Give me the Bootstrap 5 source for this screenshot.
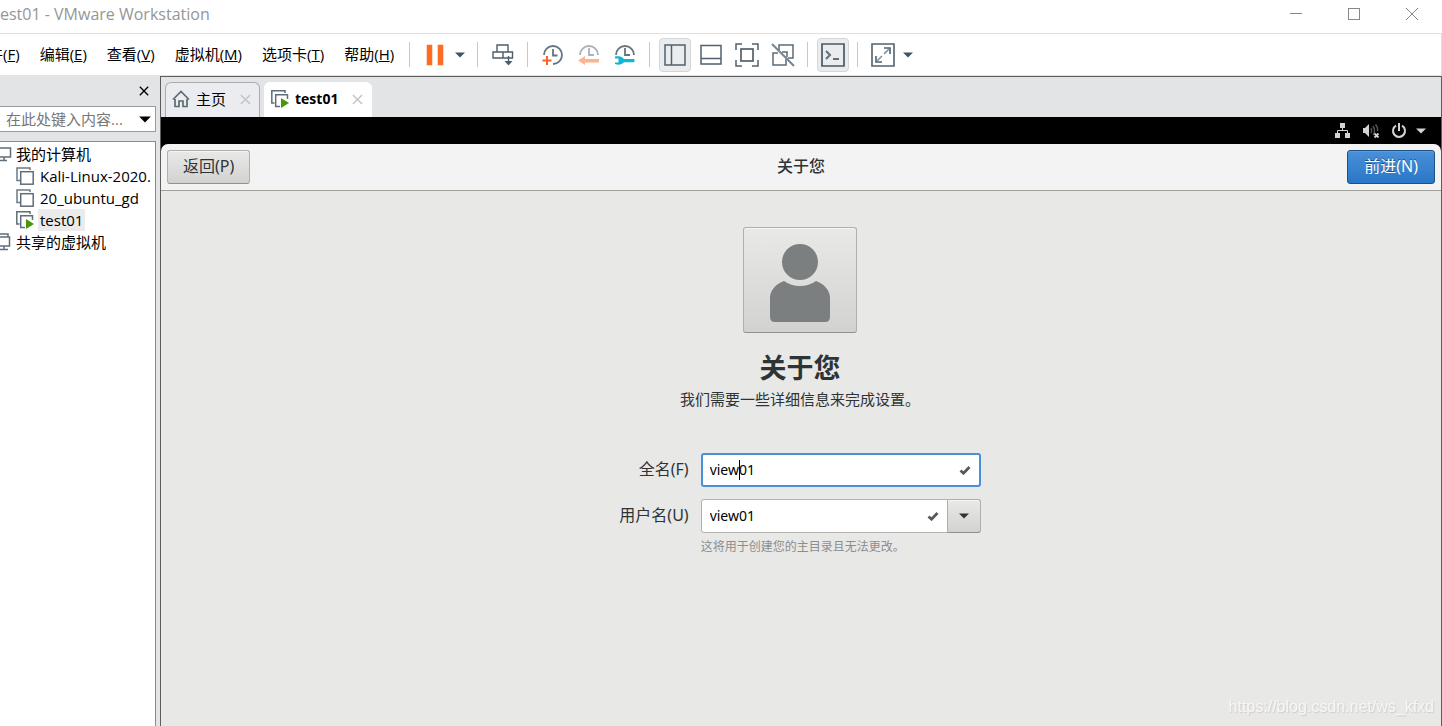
<!DOCTYPE html>
<html lang="zh-CN">
<head>
<meta charset="utf-8">
<meta name="viewport" content="width=device-width, initial-scale=1">
<title>test01 - VMware Workstation</title>
<link rel="stylesheet" href="https://cdn.jsdelivr.net/npm/bootstrap@5.3.0/dist/css/bootstrap.min.css">
<style>
body{font-family:"Open Sans","Noto Sans CJK SC",sans-serif;font-size:15px;line-height:22px;color:#000;background:#fff;overflow:hidden}
button{padding:0;border:0;background:none;color:inherit}
svg{display:block;flex:none}
.titlebar{height:34px;border-bottom:1px solid #e0e0e0;color:#969696;padding-right:1px}
.titlebar h1{font-size:16px;line-height:28px;margin:0;font-weight:400}
.winctl{width:58px;height:28px;display:grid;place-items:center}
.toolstrip{height:42px;border-bottom:1px solid #e3e3e3;border-right:1px solid #ddd}
.menus{gap:20px;margin-left:-12px;padding:0 11px 2px 0}
.menus a{color:#000;text-decoration:none;white-space:nowrap}
.tools{gap:4px}
.rule{width:1px;height:25px;background:#c8c8c8;margin:0 5px 0 4px}
.tool{width:32px;height:34px;display:grid;place-items:center;border-radius:4px}
.tool.on{background:#ebecee;border:1px solid #d5d6d8}
.drop{width:14px;height:24px;display:grid;align-items:center}
.workspace{background:#e3e4e6;min-height:0}
.library{width:156px;margin-right:4px}
.library-head{height:30px;padding-right:7px}
.filter{height:26px;border:1px solid #999a9e;border-left:0;background:#fff}
.filter input{border:0;padding:0 0 0 6px;min-width:0;outline:0;background:none;color:#000}
.filter input::placeholder{color:#777;opacity:1}
.tree{border:1px solid #858b95;border-width:1px 1px 0 0;background:#fff;margin:9px 0 0;padding-top:1px}
.tree li{height:22px;white-space:nowrap;overflow:hidden}
.tree span{padding:0 2px}
.tree .vm{padding-left:16px}
.tree .host{gap:2px}
.tree .picked{background:#ebebeb}
.console{border:1px solid #5c5c5c;border-bottom:0;min-width:0}
.tabs{height:40px;padding:5px 0 0 4px;gap:4px}
.vmtab{height:35px;border:1px solid #abacae;border-bottom:0;border-radius:6px 6px 0 0;background:#ebecef;padding:0 8px 2px 6px;gap:6px}
.vmtab.current{background:#fff;border-color:#fff}
.vmtab b{font-size:14px}
.vmtab .shut{margin-left:8px}
.guest{background:#000;color:#2e3436;font-family:"Noto Sans","Noto Sans CJK SC",sans-serif}
.statusbar{height:27px;padding-right:14px}
.headerbar{height:47px;background:#f3f3f3;border-bottom:1px solid #a1a19a;border-radius:7px 7px 0 0;padding:0 6px}
.headerbar h2{font-size:16px;line-height:22px;margin:0;padding-bottom:2px;font-weight:500;text-align:center}
.gbtn{height:34px;border:1px solid #b0b0ad;border-bottom-color:#92928e;border-radius:3px;background:linear-gradient(#e9e9e7,#d2d2d0);box-shadow:inset 0 1px #f5f5f4}
.headerbar .gbtn{padding:0 15px 2px;font-size:16px;line-height:22px}
.headerbar .gbtn.go{padding:0 16px 2px}
.gbtn.go{color:#fff;border-color:#1c5187;background:linear-gradient(#4a90d9,#2a76c6);box-shadow:inset 0 1px #5b9ddf;text-shadow:0 -1px #1c5187}
.setup{background:#e8e8e6;padding:36px 2px 0 0}
.avatar{width:114px;height:106px;display:grid;place-items:center;padding-top:6px}
.setup h3{font-size:27px;line-height:38px;font-weight:700;margin:16px 0 1px}
.setup p{margin:0}
.fields{display:grid;grid-template-columns:auto 280px;column-gap:12px;row-gap:12px;align-items:center;justify-items:end;margin-top:43px}
.fields label{font-size:16px;padding-bottom:2px}
.entry{width:280px;height:34px;border:1px solid #b0b0ad;border-radius:3px;background:#fff;color:#000}
.entry input{border:0;outline:0;background:none;min-width:0;padding:0 0 0 8px;line-height:22px;color:#000;font-family:"Noto Sans",sans-serif;font-size:14px}
.entry.active{border:2px solid #4a90d9;padding-right:8px}
.entry.active input{padding-left:7px}
.cursor{position:absolute;left:36px;top:5px;width:1px;height:20px;background:#000}
.entry .gbtn{width:34px;margin:-1px;border-radius:0 3px 3px 0;display:grid;place-items:center}
.hint{grid-column:2;justify-self:start;font-size:12px;line-height:20px;color:#8b8e8f;margin-top:-8px!important}
.watermark{position:absolute;right:7px;bottom:8px;font:16px/22px "Liberation Sans",sans-serif;color:#f7f7f6;text-shadow:1px 1px 1px #ccc;text-decoration:none}
</style>
</head>
<body class="vh-100 d-flex flex-column">
<svg width="0" height="0" class="position-absolute" aria-hidden="true">
<defs>
<symbol id="vm" viewBox="0 0 18 18"><path d="M4 13.500H1V1H14V3" fill="none" stroke="#6c7a87" stroke-width="1.500"/><rect x="4.700" y="4.700" width="12.500" height="12.500" fill="#fff" stroke="#5f6e7b" stroke-width="1.500"/></symbol>
<symbol id="vmrun" viewBox="0 0 18 18"><path d="M3.500 13H.8V.8H14V3M9 16.500H4.700V4.700H16.500V9" fill="none" stroke="#5f6e7b" stroke-width="1.500"/><path d="M10 8 18 13 10 18Z" fill="#45980c"/></symbol>
<symbol id="tri" viewBox="0 0 10 6"><path d="M0 .5H10L5 5.500Z" fill="currentColor"/></symbol>
<symbol id="cross" viewBox="0 0 12 12"><path d="M1 1 11 11M11 1 1 11" stroke="currentColor" stroke-width="1.600"/></symbol>
<symbol id="check" viewBox="0 0 12 10"><path d="M1.500 5.500 4.500 8.200 10.500 2" fill="none" stroke="#555a5b" stroke-width="2.800"/></symbol>
</defs>
</svg>

<header class="titlebar d-flex justify-content-between flex-shrink-0">
<h1>est01 - VMware Workstation</h1>
<div class="d-flex">
<button class="winctl" aria-label="最小化"><svg width="12" height="12"><path d="M0 5.500H12" stroke="#888"/></svg></button>
<button class="winctl" aria-label="最大化"><svg width="12" height="12"><rect x=".5" y=".5" width="11" height="11" fill="none" stroke="#888"/></svg></button>
<button class="winctl" aria-label="关闭"><svg width="12" height="12"><path d="M0 0 12 12M12 0 0 12" stroke="#888"/></svg></button>
</div>
</header>

<div class="toolstrip d-flex align-items-center flex-shrink-0">
<nav class="menus d-flex">
<a href="#">件(<u>F</u>)</a><a href="#">编辑(<u>E</u>)</a><a href="#">查看(<u>V</u>)</a><a href="#">虚拟机(<u>M</u>)</a><a href="#">选项卡(<u>T</u>)</a><a href="#">帮助(<u>H</u>)</a>
</nav>
<div class="tools d-flex align-items-center">
<span class="rule"></span>
<button class="tool" aria-label="挂起"><svg width="18" height="22"><path d="M1 1H6V21H1ZM12 1H17V21H12Z" fill="#ff6a1f" stroke="#ee7a3b" stroke-width=".6"/></svg></button>
<button class="drop" aria-label="电源"><svg width="10" height="6" color="#44535f"><use href="#tri"/></svg></button>
<span class="rule"></span>
<button class="tool" aria-label="发送按键"><svg width="22" height="22" fill="none" stroke="#4e5d69" stroke-width="1.400"><path d="M5 8V1H16V8M1 8H20.500V14H1ZM11 8V14M16.500 12V20"/><path d="M12.500 17H20.500L16.500 21.500Z" fill="#4e5d69" stroke="none"/></svg></button>
<span class="rule"></span>
<button class="tool" aria-label="拍摄快照"><svg width="22" height="22" fill="none" stroke="#65737f" stroke-width="1.800"><path d="M2 11A9 9 0 1 1 11 20M11 5V11.500H15.500"/><path d="M5 12V21M.5 16.500H9.500" stroke="#f26522" stroke-width="2"/></svg></button>
<button class="tool" aria-label="恢复快照"><svg width="22" height="22" fill="none" stroke="#a9b2b9" stroke-width="1.800"><path d="M2 11A9 9 0 0 1 20 11M11 4V11H16"/><path d="M0 16.500 7 12V15H21V18.500H7V21Z" fill="#ffb28e" stroke="none"/></svg></button>
<button class="tool" aria-label="管理快照"><svg width="22" height="22" fill="none" stroke="#65737f" stroke-width="1.800"><path d="M2 11A9 9 0 0 1 20 11M11 4V11H16"/><path d="M1 12.500C8 11 10 15 10 15H20Q21.500 16.500 20 18.200H10Q7 22 1 20V18.500H4.500V14.500H1Z" fill="#11b5d5" stroke="none"/></svg></button>
<span class="rule"></span>
<button class="tool on" aria-label="显示库"><svg width="22" height="22" fill="none" stroke="#52616d" stroke-width="1.500"><path d="M1 1H21V21H1ZM7.500 1V21"/></svg></button>
<button class="tool" aria-label="缩略图栏"><svg width="22" height="22" fill="none" stroke="#52616d" stroke-width="1.500"><path d="M1 1.500H21V20H1ZM1 14.500H21"/></svg></button>
<button class="tool" aria-label="全屏"><svg width="24" height="24" fill="none" stroke="#52616d" stroke-width="1.500"><path d="M1 7V1H7M17 1H23V7M23 17V23H17M7 23H1V17"/><rect x="6" y="6" width="12" height="12" stroke-width="1.700"/></svg></button>
<button class="tool" aria-label="Unity"><svg width="24" height="24" fill="none" stroke="#5c6b77" stroke-width="1.500"><path d="M8 7V2H22V15H17M7 10H2V22H15V16M11 9H16V14"/><path d="M1 1 23 23" stroke="#748492" stroke-width="2"/></svg></button>
<span class="rule"></span>
<button class="tool on" aria-label="控制台"><svg width="24" height="24" fill="none" stroke="#4a5965" stroke-width="1.700"><path d="M1 1H23V23H1Z"/><path d="M5 8 9 12 5 16M12 16H18" stroke="#61707c" stroke-width="2"/></svg></button>
<span class="rule"></span>
<button class="tool" aria-label="拉伸"><svg width="24" height="24" fill="none" stroke="#52616d" stroke-width="1.600"><path d="M1 1H23V23H1Z"/><path d="M13 5H19V11M5 13V19H11"/><path d="M6 18 18 6" stroke-dasharray="7 3" stroke="#84919b"/></svg></button>
<button class="drop" aria-label="拉伸选项"><svg width="10" height="6" color="#44535f"><use href="#tri"/></svg></button>
</div>
</div>

<div class="workspace d-flex flex-fill">
<aside class="library d-flex flex-column flex-shrink-0">
<div class="library-head d-flex align-items-center justify-content-end"><button aria-label="关闭库"><svg width="10" height="10"><use href="#cross"/></svg></button></div>
<div class="filter d-flex align-items-center flex-shrink-0">
<input class="flex-fill" type="text" aria-label="搜索" placeholder="在此处键入内容...">
<button class="px-1" aria-label="筛选"><svg width="12" height="7"><use href="#tri"/></svg></button>
</div>
<ul class="tree list-unstyled flex-fill">
<li class="host d-flex align-items-center"><svg width="12" height="16" fill="none" stroke="#5f6e7b" stroke-width="1.500"><path d="M0 2H10.500V11H0M4 11V14M0 14.500H7"/></svg><span>我的计算机</span></li>
<li class="vm d-flex align-items-center gap-1"><svg width="18" height="18"><use href="#vm"/></svg><span>Kali-Linux-2020.</span></li>
<li class="vm d-flex align-items-center gap-1"><svg width="18" height="18"><use href="#vm"/></svg><span>20_ubuntu_gd</span></li>
<li class="vm d-flex align-items-center gap-1"><svg width="18" height="18"><use href="#vmrun"/></svg><span class="picked">test01</span></li>
<li class="host d-flex align-items-center"><svg width="12" height="18" fill="none" stroke="#5f6e7b" stroke-width="1.500"><path d="M0 1H8V4M0 4H9.500V13H0M4 13V16M0 16.500H8"/></svg><span>共享的虚拟机</span></li>
</ul>
</aside>

<main class="console d-flex flex-column flex-fill">
<div class="tabs d-flex flex-shrink-0">
<div class="vmtab d-flex align-items-center"><svg width="18" height="18" fill="none" stroke="#5c6b77" stroke-width="1.700"><path d="M1 9.500 9 1.500 17 9.500M3 9V16.500H7V11H11V16.500H15V9"/></svg><span>主页</span><button class="shut" aria-label="关闭主页"><svg width="11" height="11" color="#c3c4c6"><use href="#cross"/></svg></button></div>
<div class="vmtab current d-flex align-items-center"><svg width="18" height="18"><use href="#vmrun"/></svg><b>test01</b><button class="shut" aria-label="关闭 test01"><svg width="11" height="11" color="#c3c4c6"><use href="#cross"/></svg></button></div>
</div>

<div class="guest d-flex flex-column flex-fill">
<div class="statusbar d-flex align-items-center justify-content-end flex-shrink-0">
<svg class="me-2" width="20" height="16" fill="#d3d3d1"><path d="M5 0H10V5H5ZM0 10H5V15H0ZM10 10H15V15H10Z"/><path d="M7.500 5V8M2.500 10V7.500H12.500V10" fill="none" stroke="#d3d3d1"/></svg>
<svg class="me-2" width="20" height="16"><path d="M0 5H2L6 1V14L2 10H0Z" fill="#d3d3d1"/><path d="M8 5Q9.500 7.500 8 10M10 3Q13 7.500 10 12M12.500 1.500Q15 4 14.500 8" fill="none" stroke="#555" stroke-width="1.500"/><path d="M11.500 10.500 15.500 14.500M15.500 10.500 11.500 14.500" stroke="#d3d3d1" stroke-width="1.800"/></svg>
<svg width="16" height="16" fill="none" stroke="#d3d3d1" stroke-width="2"><path d="M5 2.700A6 6 0 1 0 11 2.700M8 0V8"/></svg>
<svg class="ms-2" width="12" height="6" color="#d3d3d1"><use href="#tri"/></svg>
</div>
<div class="headerbar row g-0 align-items-center flex-shrink-0">
<div class="col"><button class="gbtn">返回(P)</button></div>
<h2 class="col">关于您</h2>
<div class="col text-end"><button class="gbtn go">前进(N)</button></div>
</div>
<section class="setup position-relative d-flex flex-column align-items-center flex-fill">
<button class="gbtn avatar" aria-label="头像"><svg width="62" height="80" fill="#7c7f7f"><circle cx="31" cy="19" r="18"/><path d="M15 38Q22 43 31 43T47 38C55 41 61 47 61 55V74Q61 79 56 79H6Q1 79 1 74V55C1 47 7 41 15 38Z"/></svg></button>
<h3>关于您</h3>
<p>我们需要一些详细信息来完成设置。</p>
<form class="fields">
<label for="full">全名(F)</label>
<div class="entry active position-relative d-flex align-items-center"><input id="full" class="flex-fill" type="text" value="view01"><span class="cursor"></span><svg width="12" height="10"><use href="#check"/></svg></div>
<label for="user">用户名(U)</label>
<div class="entry d-flex align-items-center"><input id="user" class="flex-fill" type="text" value="view01"><svg class="me-2" width="14" height="10"><use href="#check"/></svg><button type="button" class="gbtn" aria-label="选择用户名"><svg width="10" height="6" color="#2e3436"><use href="#tri"/></svg></button></div>
<p class="hint">这将用于创建您的主目录且无法更改。</p>
</form>
<a class="watermark" href="#">https://blog.csdn.net/ws_kfxd</a>
</section>
</div>
</main>
</div>
<script src="https://cdn.jsdelivr.net/npm/bootstrap@5.3.0/dist/js/bootstrap.bundle.min.js"></script>
</body>
</html>
